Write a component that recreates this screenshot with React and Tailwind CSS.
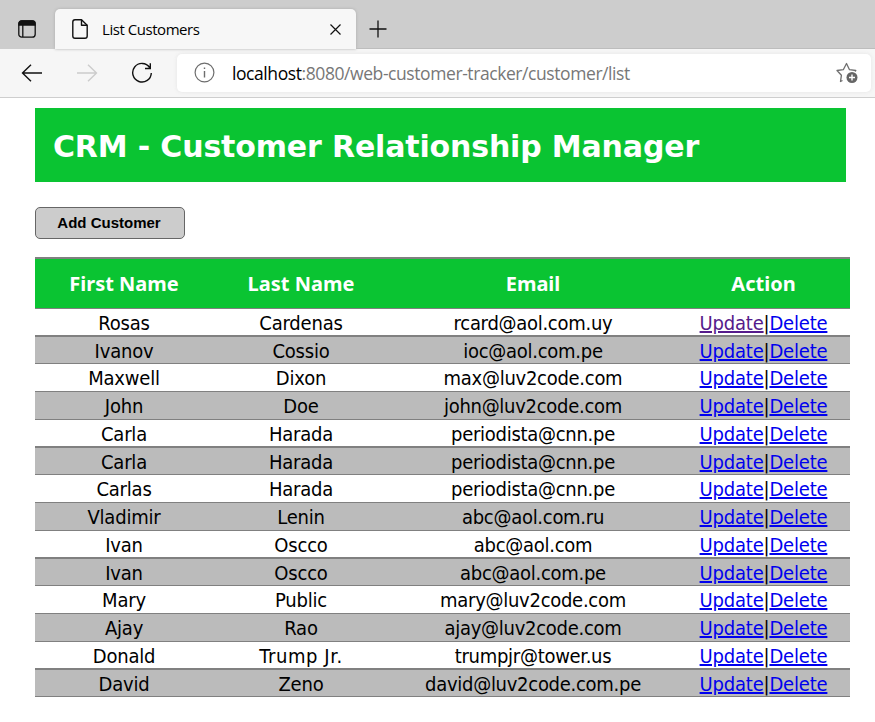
const rows = [
  ["Rosas", "Cardenas", "rcard@aol.com.uy"],
  ["Ivanov", "Cossio", "ioc@aol.com.pe"],
  ["Maxwell", "Dixon", "max@luv2code.com"],
  ["John", "Doe", "john@luv2code.com"],
  ["Carla", "Harada", "periodista@cnn.pe"],
  ["Carla", "Harada", "periodista@cnn.pe"],
  ["Carlas", "Harada", "periodista@cnn.pe"],
  ["Vladimir", "Lenin", "abc@aol.com.ru"],
  ["Ivan", "Oscco", "abc@aol.com"],
  ["Ivan", "Oscco", "abc@aol.com.pe"],
  ["Mary", "Public", "mary@luv2code.com"],
  ["Ajay", "Rao", "ajay@luv2code.com"],
  ["Donald", "Trump Jr.", "trumpjr@tower.us"],
  ["David", "Zeno", "david@luv2code.com.pe"],
];

// The rules repeat every four rows: one thick rule, then three thin ones.
const rowShape = [
  "h-[28px] border-b-2",
  "h-[27px] border-b",
  "h-[28px] border-b",
  "h-[28px] border-b",
];

const columns = "grid grid-cols-[178px_176px_288px_173px] text-center";

function TabStrip() {
  return (
    <div className="flex h-[49px] items-end bg-[#cdcdcd]">
      <div className="flex h-[49px] w-[55px] items-center pt-[9px] pl-[18px]">
        <svg width="18" height="18" viewBox="0 0 18 18" fill="none" stroke="#111" strokeWidth="1.3">
          <rect x="0.8" y="0.8" width="16.4" height="16.4" rx="3" />
          <path d="M1 5V3.500Q1 1 3.500 1h11Q17 1 17 3.500V5z" fill="#111" />
          <path d="M4.800 5v12" />
        </svg>
      </div>
      <div className="flex h-10 w-[301px] items-center rounded-t-[5px] bg-[#f7f7f7] pl-[17px] shadow-[0_0_3px_#aaa]">
        <svg width="16" height="20" viewBox="0 0 16 20" fill="none" stroke="#111" strokeWidth="1.4" strokeLinejoin="round">
          <path d="M3 .8h6.500L15.200 6.300V17q0 2.200-2.200 2.200H3Q.8 19.200.8 17V3Q.8.8 3 .8z" />
          <path d="M9.500.8v5.500h5.700" />
        </svg>
        <span className="ml-[14px] w-[228px] pb-px text-[15px] leading-5 tracking-[-0.45px] whitespace-nowrap text-black">List Customers</span>
        <svg width="11" height="11" viewBox="0 0 11 11" stroke="#111" strokeWidth="1.2"><path d="M.5.5l10 10M10.500.5l-10 10" /></svg>
      </div>
      <div className="flex h-[49px] flex-1 items-center border-b border-[#bdbdbd] pt-[9px] pl-[13px]">
        <svg width="18" height="18" viewBox="0 0 18 18" stroke="#111" strokeWidth="1.3"><path d="M9 .5v17M.5 9h17" /></svg>
      </div>
    </div>
  );
}

function Toolbar() {
  return (
    <div className="flex h-[49px] items-center border-b border-[#cecece] bg-[#f6f6f6] pb-px pl-[21px]">
      <svg width="21" height="18" viewBox="0 0 21 18" fill="none" stroke="#111" strokeWidth="1.4"><path d="M10 .7L1.500 9l8.500 8.300M1.500 9H21" /></svg>
      <svg className="ml-[35px]" width="21" height="18" viewBox="0 0 21 18" fill="none" stroke="#ccc" strokeWidth="1.4"><path d="M11 .7L19.500 9 11 17.300M19.500 9H0" /></svg>
      <svg className="ml-[33px]" width="22" height="22" viewBox="0 0 22 22" fill="none" stroke="#111" strokeWidth="1.4"><path d="M18.700 5.500A9.300 9.300 0 1 0 20.300 11M19.300 1.200v5.300h-5.300" /></svg>
      <div className="ml-[24px] flex h-[38px] w-[694px] items-center rounded-[5px] bg-white pl-[17px] shadow-[0_0_4px_#e4e4e4]">
        <svg width="21" height="21" viewBox="0 0 21 21" fill="none" stroke="#6d6d6d" strokeWidth="1.2">
          <circle cx="10.500" cy="10.500" r="9.400" /><path d="M10.500 9v6.500M10.500 5.500v1.600" strokeWidth="1.4" />
        </svg>
        <span className="ml-[17px] w-[604px] text-[17.5px] leading-6 tracking-[-0.42px] whitespace-nowrap text-[#777]"><span className="text-black">localhost</span>:8080/web-customer-tracker/customer/list</span>
        <svg width="22" height="22" viewBox="0 0 22 22" fill="none">
          <path d="M6.500 18.500l-2 1L5.400 13.300 1 8.500l6.300-.8L10.500 1.500l3 6.200 6.300.8-1 1" stroke="#6e6e6e" strokeWidth="1.3" strokeLinejoin="round" />
          <circle cx="16" cy="15.500" r="5.500" fill="#666" /><path d="M16 12.500v6M13 15.500h6" stroke="#fff" strokeWidth="1.4" />
        </svg>
      </div>
    </div>
  );
}

function CustomerTable() {
  return (
    <div className="mt-[18px] ml-[35px] w-[815px] font-['DejaVu_Sans_Condensed','DejaVu_Sans',sans-serif] text-[20px] font-stretch-condensed">
      <div className={`${columns} h-[52px] items-center border-t-2 border-b border-[#808080] bg-[#0ac432] font-['Noto_Sans',sans-serif] font-bold text-white`}>
        <span>First Name</span><span>Last Name</span><span>Email</span><span>Action</span>
      </div>
      {rows.map(([first, last, email], i) => (
        <div key={i} className={`${columns} ${rowShape[i % 4]} border-[#808080] leading-[29px] tracking-[-0.2px] ${i % 2 ? "bg-[#bbb]" : "bg-white"}`}>
          <span>{first}</span>
          <span className={last.includes(" ") ? "tracking-[0.6px]" : ""}>{last}</span>
          <span className="tracking-[-0.28px]">{email}</span>
          <span><a className={`underline ${i ? "text-[#0000ee]" : "text-[#551a8b]"}`}>Update</a>|<a className="text-[#0000ee] underline">Delete</a></span>
        </div>
      ))}
    </div>
  );
}

export default function App() {
  return (
    <div className="h-[722px] w-[875px] overflow-hidden bg-white font-['Open_Sans',sans-serif] text-black">
      <TabStrip />
      <Toolbar />
      <h2 className="mt-[10px] ml-[35px] flex h-[74px] w-[811px] items-center bg-[#0ac432] pt-[3px] pl-[18px] font-['DejaVu_Sans',sans-serif] text-[30px] font-bold tracking-[-0.16px] whitespace-nowrap text-white">CRM - Customer Relationship Manager</h2>
      <button className="mt-[25px] ml-[35px] block h-8 w-[150px] rounded-[5px] border border-[#666] bg-[#ccc] pr-[2px] font-['Liberation_Sans',sans-serif] text-[15px] font-bold">Add Customer</button>
      <CustomerTable />
    </div>
  );
}
